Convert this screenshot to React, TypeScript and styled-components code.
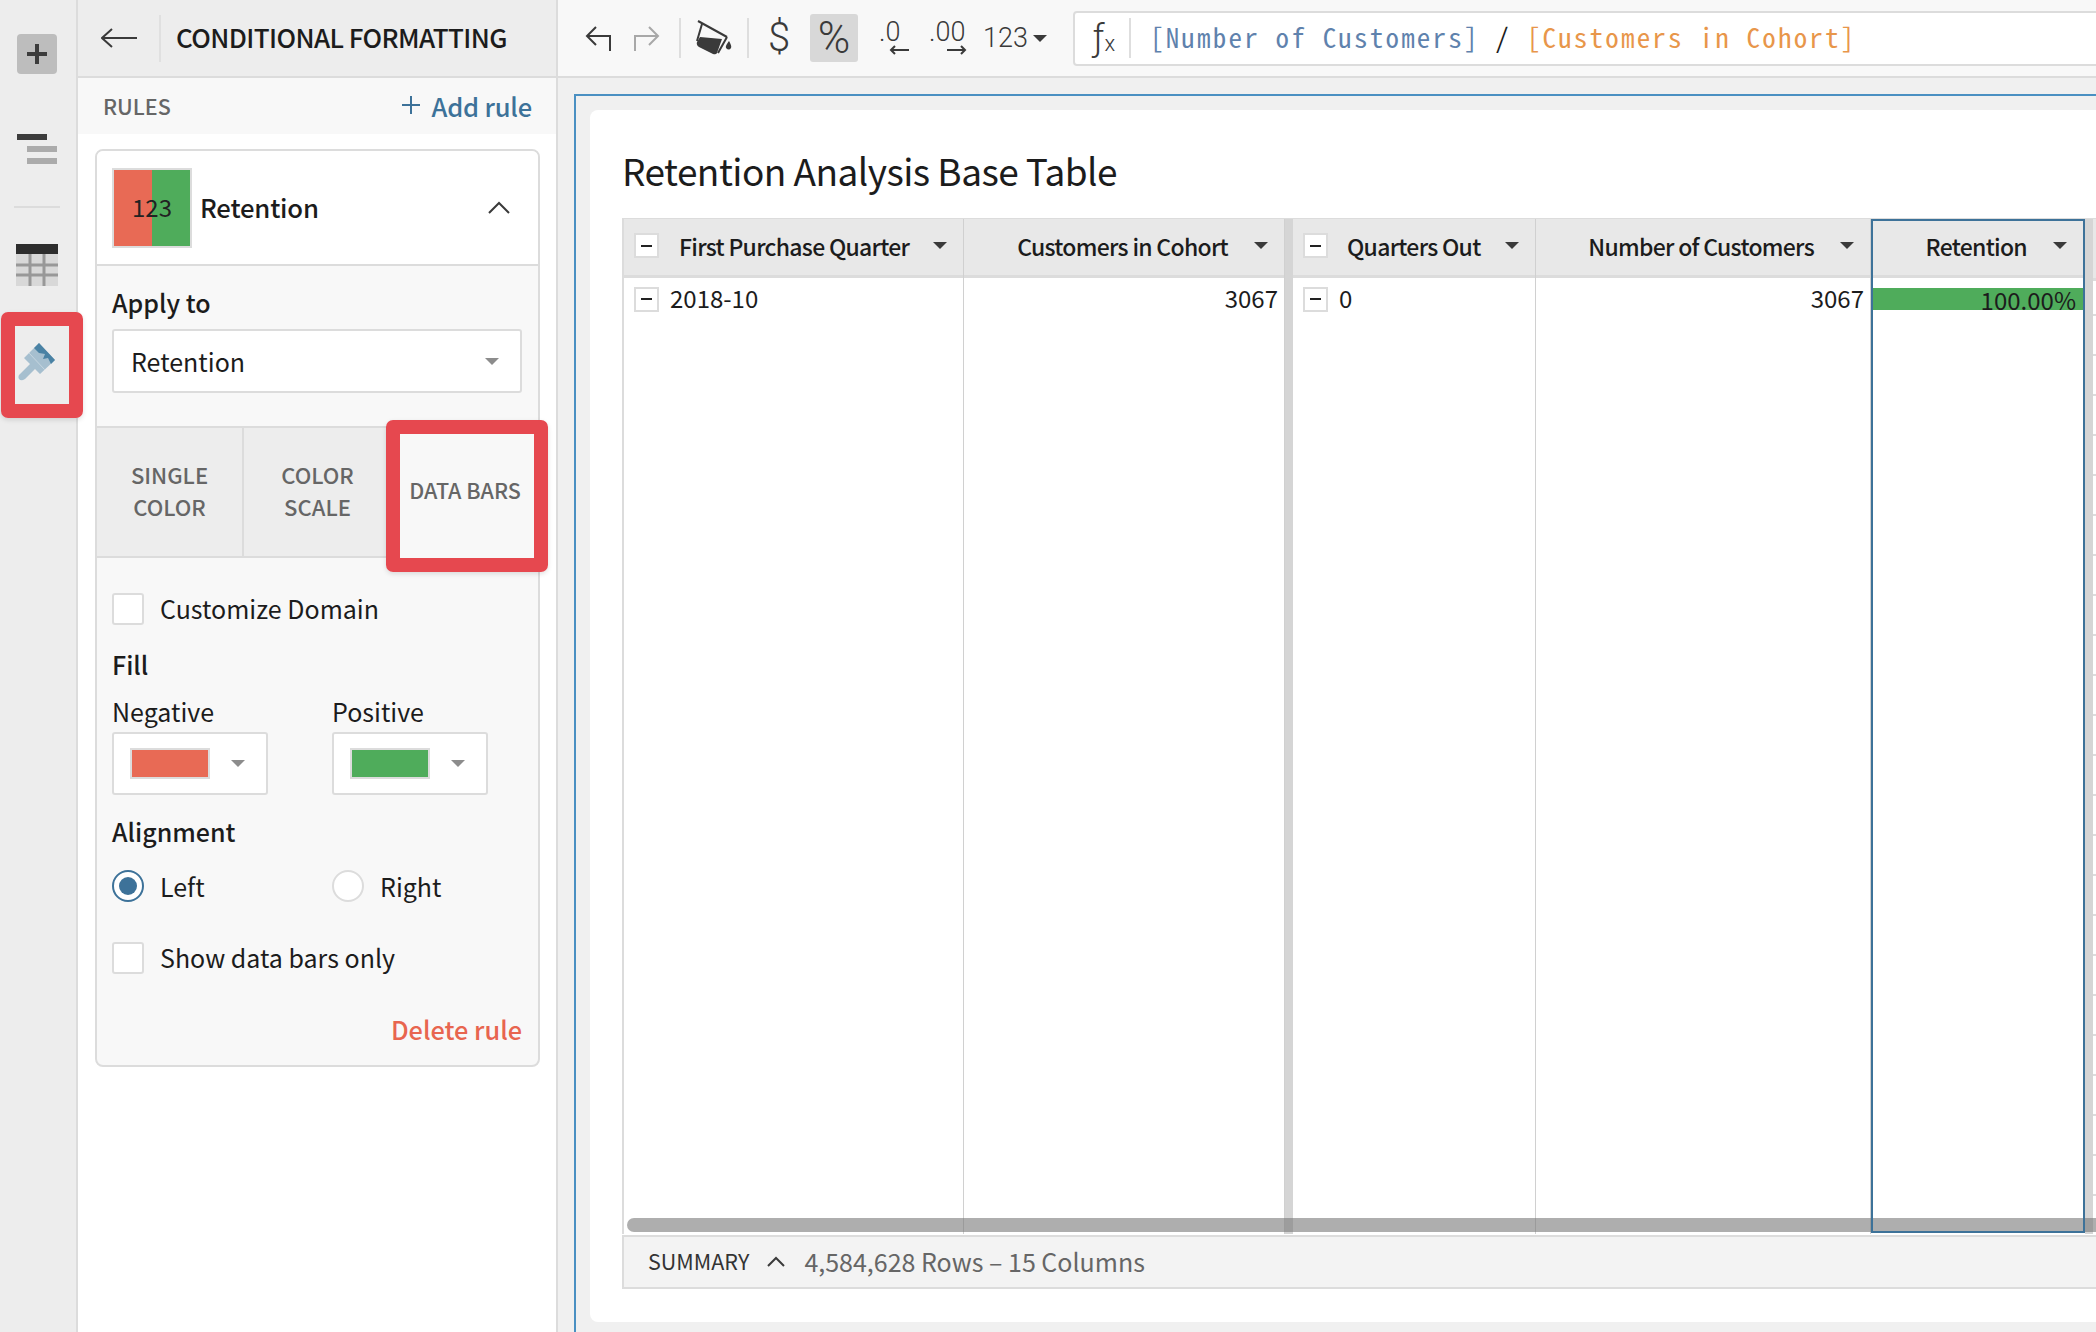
import React from 'react';
import styled, { createGlobalStyle } from 'styled-components';

const SANS = `'Noto Sans CJK SC', 'Noto Sans', sans-serif`;
const MONO = `'Noto Sans Mono CJK SC', 'Liberation Mono', monospace`;
const BLUE = '#3d7299';
const RED = '#e86a55';
const GREEN = '#4fac5b';
const LINE = '#dcdcdc';

const GlobalStyle = createGlobalStyle`
  html, body {
    margin: 0;
    height: 1332px;
    overflow: hidden;
    font-family: ${SANS};
    color: #1c1c1c;
  }
  * {
    box-sizing: border-box;
  }
`;

const Page = styled.div`
  display: flex;
  position: relative;
  height: 1332px;
  width: 2096px;
  overflow: hidden;
`;

/* left rail */
const Rail = styled.div`
  width: 78px;
  flex: none;
  background: #ededed;
  border-right: 2px solid ${LINE};
  padding: 34px 0 0 17px;
`;

const AddButton = styled.div`
  width: 40px;
  height: 40px;
  background: #bdbdbd;
  border-radius: 4px;
  display: flex;
  align-items: center;
  justify-content: center;
`;

const OutlineIcon = styled.div`
  margin-top: 60px;
  width: 40px;
  display: flex;
  flex-direction: column;
  gap: 6px;
`;

const OutlineBar = styled.div<{ $dark?: boolean }>`
  height: 6px;
  width: 30px;
  margin-left: ${(p) => (p.$dark ? '0' : '10px')};
  background: ${(p) => (p.$dark ? '#3c3c3c' : '#ababab')};
`;

const RailDivider = styled.div`
  width: 46px;
  height: 2px;
  background: ${LINE};
  margin: 42px 0 36px -3px;
`;

const TableSlot = styled.div`
  margin-left: -1px;
  height: 42px;
`;

const BrushSlot = styled.div`
  margin: 57px 0 0 1px;
  width: 38px;
  height: 38px;
`;

/* annotation boxes */
const Callout = styled.div<{ $x: number; $y: number; $w: number; $h: number }>`
  position: absolute;
  left: ${(p) => p.$x}px;
  top: ${(p) => p.$y}px;
  width: ${(p) => p.$w}px;
  height: ${(p) => p.$h}px;
  border: 14px solid #e6484f;
  border-radius: 7px;
  z-index: 5;
  box-shadow: 0 2px 5px rgba(0, 0, 0, 0.12);
`;

/* conditional formatting panel */
const Panel = styled.div`
  width: 480px;
  flex: none;
  background: #fff;
  border-right: 2px solid ${LINE};
  display: flex;
  flex-direction: column;
`;

const PanelHeader = styled.div`
  height: 78px;
  flex: none;
  background: #ededed;
  border-bottom: 2px solid ${LINE};
  display: flex;
  align-items: center;
  padding-left: 23px;
`;

const HeaderSep = styled.div`
  width: 2px;
  height: 47px;
  background: #e0e0e0;
  margin: 0 15px 0 22px;
`;

const PanelTitle = styled.div`
  font-size: 26px;
  font-weight: 500;
  letter-spacing: -0.6px;
  white-space: nowrap;
  margin-bottom: 4px;
`;

const RulesRow = styled.div`
  height: 56px;
  flex: none;
  background: #f8f8f8;
  display: flex;
  align-items: center;
  justify-content: space-between;
  padding: 0 24px 2px 25px;
`;

const RulesLabel = styled.div`
  font-size: 21.500px;
  font-weight: 500;
  color: #666;
`;

const AddRule = styled.div`
  font-size: 25.500px;
  font-weight: 500;
  letter-spacing: -0.2px;
  color: ${BLUE};
  display: flex;
  align-items: center;
  gap: 12px;
`;

const RuleCard = styled.div`
  margin: 15px 16px 0 17px;
  height: 918px;
  border: 2px solid ${LINE};
  border-radius: 8px;
  background: #f8f8f8;
  overflow: hidden;
`;

const RuleHead = styled.div`
  height: 115px;
  background: #fff;
  border-bottom: 2px solid ${LINE};
  display: flex;
  align-items: center;
  padding: 0 28px 0 15px;
`;

const Swatch = styled.div`
  width: 80px;
  height: 80px;
  border: 2px solid ${LINE};
  background: linear-gradient(90deg, ${RED} 50%, ${GREEN} 50%);
  display: flex;
  align-items: center;
  justify-content: center;
  padding-bottom: 3px;
  font-size: 24px;
  color: #222;
`;

const RuleName = styled.div`
  flex: 1;
  margin-left: 8px;
  padding-bottom: 3px;
  font-size: 25.700px;
  font-weight: 500;
  letter-spacing: -0.2px;
`;

const ApplySection = styled.div`
  height: 160px;
  padding: 19px 15px 0;
`;

const SectionLabel = styled.div<{ $top?: number }>`
  font-size: 25px;
  font-weight: 500;
  line-height: 34px;
  margin-top: ${(p) => p.$top ?? 0}px;
`;

const Select = styled.div`
  margin-top: 10px;
  height: 64px;
  width: 410px;
  background: #fff;
  border: 2px solid ${LINE};
  border-radius: 3px;
  display: flex;
  align-items: center;
  justify-content: space-between;
  padding: 0 21px 0 17px;
  font-size: 25px;
`;

const Caret = styled.span<{ $size?: number; $color?: string }>`
  display: inline-block;
  flex: none;
  width: 0;
  height: 0;
  border-left: ${(p) => p.$size ?? 7}px solid transparent;
  border-right: ${(p) => p.$size ?? 7}px solid transparent;
  border-top: ${(p) => p.$size ?? 7}px solid ${(p) => p.$color ?? '#8c8c8c'};
`;

const Tabs = styled.div`
  display: grid;
  grid-template-columns: 147px 147px 146px;
  height: 132px;
  border-top: 2px solid ${LINE};
`;

const Tab = styled.div<{ $active?: boolean }>`
  display: flex;
  align-items: center;
  justify-content: center;
  text-align: center;
  font-size: ${(p) => (p.$active ? '21.5px' : '22px')};
  font-weight: 500;
  line-height: 32px;
  color: #666;
  padding: 0 0 5px ${(p) => (p.$active ? '4px' : '0')};
  background: ${(p) => (p.$active ? '#f8f8f8' : '#ededed')};
  border-bottom: 2px solid ${(p) => (p.$active ? 'transparent' : LINE)};
  border-right: 2px solid ${(p) => (p.$active ? 'transparent' : LINE)};
  &:nth-child(2) {
    border-right: none;
  }
`;

const FormBody = styled.div`
  padding: 35px 16px 0 15px;
`;

const CheckRow = styled.div<{ $top?: number }>`
  display: flex;
  align-items: center;
  height: 32px;
  margin-top: ${(p) => p.$top ?? 0}px;
  font-size: 25px;
`;

const CheckLabel = styled.span`
  margin-bottom: 2px;
`;

const CheckBox = styled.div`
  width: 32px;
  height: 32px;
  flex: none;
  background: #fff;
  border: 2px solid ${LINE};
  border-radius: 3px;
  margin-right: 16px;
`;

const FillRow = styled.div`
  display: grid;
  grid-template-columns: 220px 1fr;
  margin-top: 13px;
`;

const FieldLabel = styled.div`
  font-size: 25px;
  line-height: 34px;
`;

const ColorSelect = styled.div`
  margin-top: 4px;
  width: 156px;
  height: 63px;
  background: #fff;
  border: 2px solid ${LINE};
  border-radius: 3px;
  display: flex;
  align-items: center;
  padding-left: 16px;
  gap: 21px;
`;

const ColorChip = styled.div<{ $color: string }>`
  width: 80px;
  height: 31px;
  background: ${(p) => p.$color};
  border: 2px solid ${LINE};
`;

const RadioRow = styled.div`
  display: grid;
  grid-template-columns: 220px 1fr;
  margin-top: 22px;
`;

const RadioItem = styled.div`
  display: flex;
  align-items: center;
  height: 32px;
  font-size: 25px;
`;

const Radio = styled.div<{ $on?: boolean }>`
  width: 32px;
  height: 32px;
  flex: none;
  border-radius: 50%;
  background: #fff;
  border: 2px solid ${(p) => (p.$on ? BLUE : LINE)};
  margin-right: 16px;
  display: flex;
  align-items: center;
  justify-content: center;
  &::after {
    content: '';
    display: ${(p) => (p.$on ? 'block' : 'none')};
    width: 18px;
    height: 18px;
    border-radius: 50%;
    background: ${BLUE};
  }
`;

const DeleteRule = styled.div`
  margin-top: 38px;
  text-align: right;
  font-size: 25.300px;
  font-weight: 500;
  line-height: 34px;
  color: #e8654f;
`;

/* main area */
const Main = styled.div`
  flex: 1;
  min-width: 0;
  display: flex;
  flex-direction: column;
  background: #f0f0f0;
`;

const Toolbar = styled.div`
  height: 78px;
  flex: none;
  background: #f8f8f8;
  border-bottom: 2px solid ${LINE};
  display: flex;
  align-items: center;
  padding-left: 27px;
`;

const ToolSlot = styled.div<{ $w: number; $active?: boolean; $after?: number }>`
  width: ${(p) => p.$w}px;
  height: 48px;
  flex: none;
  margin-right: ${(p) => p.$after ?? 0}px;
  display: flex;
  align-items: center;
  justify-content: center;
  border-radius: 3px;
  background: ${(p) => (p.$active ? '#d8d8d8' : 'transparent')};
`;

const ToolSep = styled.div<{ $after: number }>`
  width: 2px;
  height: 40px;
  flex: none;
  background: #dedede;
  margin-right: ${(p) => p.$after}px;
`;

const ToolGlyph = styled.span<{ $size: number }>`
  font-family: 'Roboto', sans-serif;
  font-weight: 300;
  font-size: ${(p) => p.$size}px;
  color: #3a3a3a;
  line-height: 1;
`;

const NumberFormat = styled.div`
  display: flex;
  align-items: center;
  gap: 5px;
  flex: none;
  margin-right: 26px;
`;

const DecimalTool = styled.div<{ $w: number; $after: number }>`
  width: ${(p) => p.$w}px;
  height: 48px;
  flex: none;
  margin-right: ${(p) => p.$after}px;
  text-align: left;
`;

const DecimalText = styled.div`
  font-family: 'Roboto', sans-serif;
  font-weight: 300;
  font-size: 27px;
  line-height: 30px;
  color: #3a3a3a;
  margin-top: 3px;
  white-space: nowrap;
`;

const DecimalArrow = styled.svg<{ $right?: boolean }>`
  display: block;
  margin-left: ${(p) => (p.$right ? '18px' : '10px')};
  margin-top: -2px;
`;

const FormulaBox = styled.div`
  flex: 1;
  height: 55px;
  min-width: 0;
  margin-right: -10px;
  background: #fff;
  border: 2px solid ${LINE};
  border-radius: 4px;
  display: flex;
  align-items: center;
`;

const FxMark = styled.div`
  width: 56px;
  height: 40px;
  flex: none;
  display: flex;
  align-items: center;
  justify-content: center;
  border-right: 2px solid #dedede;
  font-family: 'Roboto', sans-serif;
  font-weight: 300;
  font-size: 36px;
  color: #3a3a3a;
  padding-left: 4px;
  & > small {
    font-size: 22px;
    margin-top: 10px;
  }
`;

const Formula = styled.div`
  margin-left: 19px;
  margin-bottom: 3px;
  font-family: ${MONO};
  font-size: 27px;
  letter-spacing: 2.200px;
  white-space: pre;
  color: #1c1c1c;
`;

const FormulaRef = styled.span<{ $color: string }>`
  color: ${(p) => p.$color};
`;

const Frame = styled.div`
  flex: 1;
  min-height: 0;
  margin: 16px 0 0 16px;
  border-top: 2px solid #4a90c2;
  border-left: 2px solid #4a90c2;
  padding: 14px 0 0 14px;
`;

const SheetCard = styled.div`
  height: 1212px;
  background: #fff;
  border-radius: 8px 0 0 8px;
  padding-left: 32px;
  display: flex;
  flex-direction: column;
`;

const SheetTitle = styled.div`
  height: 108px;
  flex: none;
  padding-top: 34px;
  font-size: 37px;
  letter-spacing: -0.55px;
  line-height: 52px;
  white-space: nowrap;
`;

const Grid = styled.div`
  position: relative;
  display: flex;
  height: 1016px;
  flex: none;
  border-top: 1px solid ${LINE};
  border-left: 2px solid ${LINE};
  overflow: hidden;
`;

const Column = styled.div<{ $w: number; $selected?: boolean }>`
  position: relative;
  width: ${(p) => p.$w}px;
  flex: none;
  display: flex;
  flex-direction: column;
  border-right: 1px solid ${(p) => (p.$selected ? 'transparent' : '#d0d0d0')};
  ${(p) =>
    p.$selected &&
    `
    &::after {
      content: '';
      position: absolute;
      inset: 0 -1px 1px 0;
      border: 2px solid ${BLUE};
      z-index: 3;
      pointer-events: none;
    }
  `}
`;

const HeadCell = styled.div<{ $left: number; $caret: number }>`
  height: 59px;
  flex: none;
  background: #e8e8e8;
  border-bottom: 3px solid ${LINE};
  display: flex;
  align-items: center;
  padding: 0 ${(p) => p.$caret}px 3px ${(p) => p.$left}px;
  font-size: 23px;
  letter-spacing: -0.72px;
  font-weight: 500;
  white-space: nowrap;
`;

const HeadText = styled.div<{ $right?: boolean }>`
  flex: 1;
  min-width: 0;
  text-align: ${(p) => (p.$right ? 'right' : 'left')};
  padding-right: 26px;
`;

const GroupToggle = styled.div<{ $after: number }>`
  width: 25px;
  height: 25px;
  flex: none;
  background: #fff;
  border: 2px solid ${LINE};
  margin-right: ${(p) => p.$after}px;
  display: flex;
  align-items: center;
  justify-content: center;
  &::after {
    content: '';
    width: 11px;
    height: 2px;
    background: #222;
  }
`;

const BodyCell = styled.div<{ $right?: boolean }>`
  height: 42px;
  flex: none;
  display: flex;
  align-items: center;
  justify-content: ${(p) => (p.$right ? 'flex-end' : 'flex-start')};
  padding: 0 6px 0 10px;
  font-size: 24px;
  white-space: nowrap;
`;

const CellValue = styled.span`
  margin-bottom: 3px;
`;

const BarCell = styled.div`
  margin: 10px 0 0 1px;
  height: 22px;
  background: ${GREEN};
  display: flex;
  align-items: center;
  justify-content: flex-end;
  padding-right: 8px;
  font-size: 24px;
`;

const FrozenGap = styled.div`
  width: 8px;
  flex: none;
  background: #d5d5d5;
`;

const NextColumn = styled.div`
  flex: 1;
  min-width: 0;
  background: repeating-linear-gradient(
    180deg,
    #fff 0,
    #fff 38px,
    ${LINE} 38px,
    ${LINE} 40px
  );
  background-position: 0 17px;
  position: relative;
  &::before {
    content: '';
    display: block;
    height: 59px;
    background: #e8e8e8;
    border-bottom: 3px solid ${LINE};
  }
`;

const ScrollThumb = styled.div`
  position: absolute;
  left: 3px;
  right: 0;
  bottom: 2px;
  height: 14px;
  border-radius: 7px 0 0 7px;
  background: rgba(120, 120, 120, 0.6);
  z-index: 2;
`;

const Summary = styled.div`
  margin-top: 1px;
  height: 54px;
  flex: none;
  background: #f3f3f3;
  border-top: 2px solid ${LINE};
  border-bottom: 2px solid ${LINE};
  border-left: 2px solid ${LINE};
  display: flex;
  align-items: center;
  padding: 0 0 3px 24px;
`;

const SummaryLabel = styled.div`
  font-size: 21.500px;
  color: #333;
`;

const SummaryChevron = styled.svg`
  margin: 3px 19px 0 18px;
`;

const SummaryText = styled.div`
  font-size: 25px;
  color: #666;
`;

const Line = ({ d, color = '#3a3a3a', w = 2 }: { d: string; color?: string; w?: number }) => (
  <path d={d} fill="none" stroke={color} strokeWidth={w} />
);

const PaintBrush = () => (
  <svg width="38" height="38" viewBox="0 0 38 38">
    <path d="M21 0L37 17L22 31L17 26L7 36Q3 38.500 1 36Q-0.500 33 2 31L12 21L6 15Z" fill="#a6bfcf" />
    <path d="M21 0L37 17L33 21L30 15L25 16L27 11L21 10L16 5Z" fill="#4a82a4" />
    <path d="M11 10L27 27" stroke="#c6d6e0" strokeWidth="1" />
  </svg>
);

const TableIcon = () => (
  <svg width="42" height="42" viewBox="0 0 42 42" display="block">
    <rect width="42" height="42" fill="#d8d8d8" />
    <rect width="42" height="10" fill="#2d2d2d" />
    <path d="M0 21H42M0 31H42M14 10V42M28 10V42" stroke="#989898" strokeWidth="3" />
  </svg>
);

const BucketIcon = () => (
  <svg width="36" height="36" viewBox="0 0 36 36">
    <path d="M2 1L31 17" stroke="#3a3a3a" strokeWidth="2" fill="none" />
    <path d="M6 4L1 21M31 17L22 33" stroke="#3a3a3a" strokeWidth="2" fill="none" />
    <path d="M4 17L26 19L21 33Q20 35 17 34L3 27Q0 25 1 22Z" fill="#3a3a3a" />
    <path d="M33 21Q29 26 30 28Q33 31 35 28Q36 26 33 21Z" fill="#3a3a3a" />
  </svg>
);

type Col = {
  title: string;
  width: number;
  toggle?: number;
  left: number;
  value: string;
  right?: boolean;
};

const FIRST_GROUP: Col[] = [
  { title: 'First Purchase Quarter', width: 340, toggle: 20, left: 10, value: '2018-10' },
  { title: 'Customers in Cohort', width: 321, left: 10, value: '3067', right: true },
];

const SECOND_GROUP: Col[] = [
  { title: 'Quarters Out', width: 243, toggle: 19, left: 10, value: '0' },
  { title: 'Number of Customers', width: 335, left: 10, value: '3067', right: true },
];

const DataColumn = ({ col }: { col: Col }) => (
  <Column $w={col.width}>
    <HeadCell $left={col.left} $caret={16}>
      {col.toggle !== undefined && <GroupToggle $after={col.toggle} />}
      <HeadText $right={col.right}>{col.title}</HeadText>
      <Caret $size={7} $color="#3a3a3a" />
    </HeadCell>
    <BodyCell $right={col.right}>
      {!col.right && <GroupToggle $after={11} />}
      <CellValue>{col.value}</CellValue>
    </BodyCell>
  </Column>
);

const App = () => (
  <Page>
    <GlobalStyle />
    <Rail>
      <AddButton>
        <svg width="20" height="20" viewBox="0 0 20 20">
          <path d="M0 10H20M10 0V20" stroke="#3c3c3c" strokeWidth="4" />
        </svg>
      </AddButton>
      <OutlineIcon>
        <OutlineBar $dark />
        <OutlineBar />
        <OutlineBar />
      </OutlineIcon>
      <RailDivider />
      <TableSlot>
        <TableIcon />
      </TableSlot>
      <BrushSlot>
        <PaintBrush />
      </BrushSlot>
    </Rail>

    <Panel>
      <PanelHeader>
        <svg width="36" height="20" viewBox="0 0 36 20">
          <Line d="M36 10H1M11 1L1 10L11 19" />
        </svg>
        <HeaderSep />
        <PanelTitle>CONDITIONAL FORMATTING</PanelTitle>
      </PanelHeader>
      <RulesRow>
        <RulesLabel>RULES</RulesLabel>
        <AddRule>
          <svg width="18" height="18" viewBox="0 0 18 18">
            <path d="M0 9H18M9 0V18" stroke={BLUE} strokeWidth="2" />
          </svg>
          Add rule
        </AddRule>
      </RulesRow>
      <RuleCard>
        <RuleHead>
          <Swatch>123</Swatch>
          <RuleName>Retention</RuleName>
          <svg width="22" height="14" viewBox="0 0 22 14">
            <Line d="M1 12L11 2L21 12" />
          </svg>
        </RuleHead>
        <ApplySection>
          <SectionLabel>Apply to</SectionLabel>
          <Select>
            Retention
            <Caret />
          </Select>
        </ApplySection>
        <Tabs>
          <Tab>
            SINGLE
            <br />
            COLOR
          </Tab>
          <Tab>
            COLOR
            <br />
            SCALE
          </Tab>
          <Tab $active>DATA BARS</Tab>
        </Tabs>
        <FormBody>
          <CheckRow>
            <CheckBox />
            <CheckLabel>Customize Domain</CheckLabel>
          </CheckRow>
          <SectionLabel $top={22}>Fill</SectionLabel>
          <FillRow>
            <div>
              <FieldLabel>Negative</FieldLabel>
              <ColorSelect>
                <ColorChip $color={RED} />
                <Caret />
              </ColorSelect>
            </div>
            <div>
              <FieldLabel>Positive</FieldLabel>
              <ColorSelect>
                <ColorChip $color={GREEN} />
                <Caret />
              </ColorSelect>
            </div>
          </FillRow>
          <SectionLabel $top={19}>Alignment</SectionLabel>
          <RadioRow>
            <RadioItem>
              <Radio $on />
              Left
            </RadioItem>
            <RadioItem>
              <Radio />
              Right
            </RadioItem>
          </RadioRow>
          <CheckRow $top={40}>
            <CheckBox />
            <CheckLabel>Show data bars only</CheckLabel>
          </CheckRow>
          <DeleteRule>Delete rule</DeleteRule>
        </FormBody>
      </RuleCard>
    </Panel>

    <Main>
      <Toolbar>
        <ToolSlot $w={26} $after={23}>
          <svg width="26" height="26" viewBox="0 0 26 26">
            <Line d="M11 2L2 11L11 20M2 11H25V26" />
          </svg>
        </ToolSlot>
        <ToolSlot $w={26} $after={19}>
          <svg width="26" height="26" viewBox="0 0 26 26">
            <Line d="M15 2L24 11L15 20M24 11H1V26" color="#a8a8a8" />
          </svg>
        </ToolSlot>
        <ToolSep $after={15} />
        <ToolSlot $w={36} $after={15}>
          <BucketIcon />
        </ToolSlot>
        <ToolSep $after={16} />
        <ToolSlot $w={28} $after={17}>
          <ToolGlyph $size={40}>$</ToolGlyph>
        </ToolSlot>
        <ToolSlot $w={48} $active $after={21}>
          <ToolGlyph $size={44}>%</ToolGlyph>
        </ToolSlot>
        <DecimalTool $w={32} $after={18}>
          <DecimalText>.0</DecimalText>
          <DecimalArrow width="20" height="10" viewBox="0 0 20 10">
            <Line d="M20 5H2M6 1L2 5L6 9" />
          </DecimalArrow>
        </DecimalTool>
        <DecimalTool $w={38} $after={16}>
          <DecimalText>.00</DecimalText>
          <DecimalArrow $right width="20" height="10" viewBox="0 0 20 10">
            <Line d="M0 5H18M14 1L18 5L14 9" />
          </DecimalArrow>
        </DecimalTool>
        <NumberFormat>
          <ToolGlyph $size={27}>123</ToolGlyph>
          <Caret $size={7} $color="#3a3a3a" />
        </NumberFormat>
        <FormulaBox>
          <FxMark>
            ƒ<small>x</small>
          </FxMark>
          <Formula>
            <FormulaRef $color="#5f82ad">[Number of Customers]</FormulaRef>
            {' / '}
            <FormulaRef $color="#e8964a">[Customers in Cohort]</FormulaRef>
          </Formula>
        </FormulaBox>
      </Toolbar>
      <Frame>
        <SheetCard>
          <SheetTitle>Retention Analysis Base Table</SheetTitle>
          <Grid>
            {FIRST_GROUP.map((col) => (
              <DataColumn key={col.title} col={col} />
            ))}
            <FrozenGap />
            {SECOND_GROUP.map((col) => (
              <DataColumn key={col.title} col={col} />
            ))}
            <Column $w={214} $selected>
              <HeadCell $left={10} $caret={17}>
                <HeadText $right>Retention</HeadText>
                <Caret $size={7} $color="#3a3a3a" />
              </HeadCell>
              <BarCell>100.00%</BarCell>
            </Column>
            <FrozenGap />
            <NextColumn />
            <ScrollThumb />
          </Grid>
          <Summary>
            <SummaryLabel>SUMMARY</SummaryLabel>
            <SummaryChevron width="18" height="12" viewBox="0 0 18 12">
              <Line d="M1 10L9 2L17 10" />
            </SummaryChevron>
            <SummaryText>4,584,628 Rows – 15 Columns</SummaryText>
          </Summary>
        </SheetCard>
      </Frame>
    </Main>

    <Callout $x={1} $y={312} $w={82} $h={106} />
    <Callout $x={386} $y={420} $w={162} $h={152} />
  </Page>
);

export default App;
